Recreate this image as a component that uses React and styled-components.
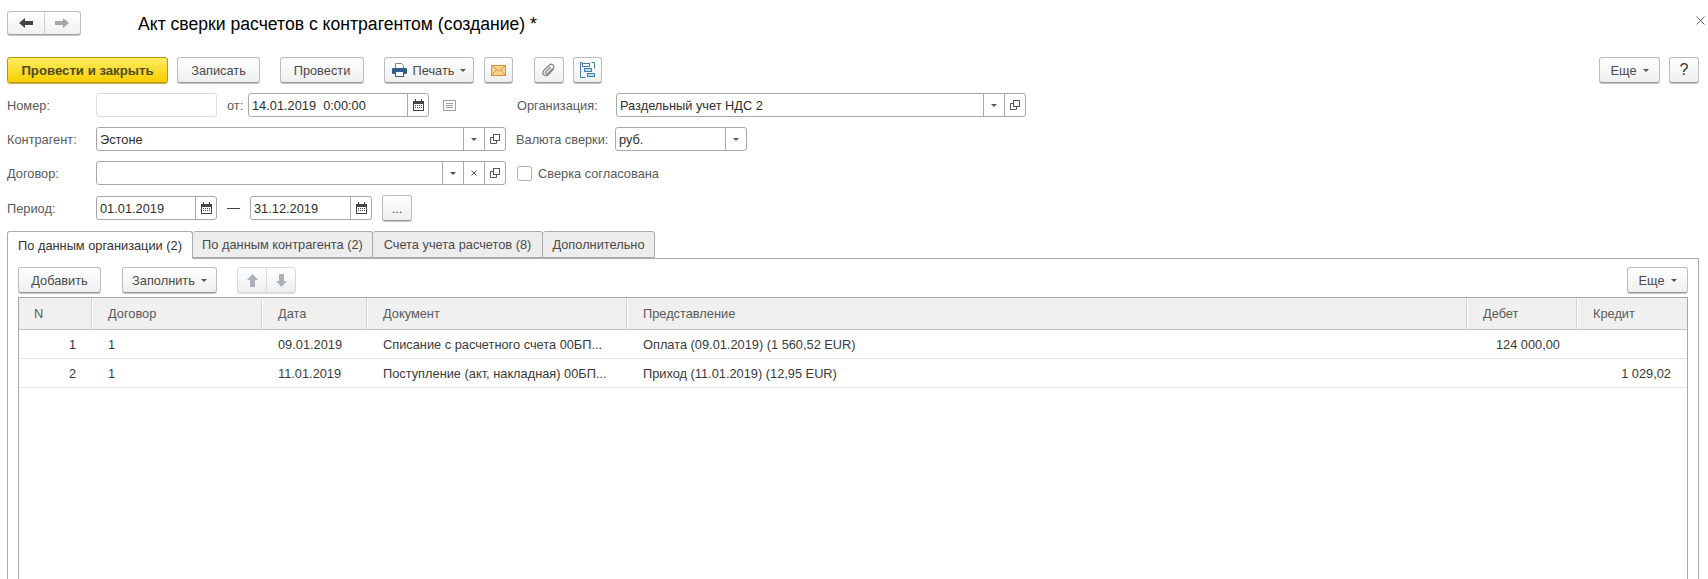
import React from "react";
import styled, { createGlobalStyle } from "styled-components";

const Global = createGlobalStyle`
  html, body { margin: 0; padding: 0; background: #fff; }
  body { font-family: "Liberation Sans", Arial, sans-serif; font-size: 12.8px; color: #4b4b4b; }
`;

const Page = styled.div`
  position: relative;
  width: 1708px;
  height: 579px;
  overflow: hidden;
  box-sizing: border-box;
  padding: 11px 9px 0 7px;
  display: flex;
  flex-direction: column;
`;
const Header = styled.div`
  display: flex;
  align-items: center;
  height: 24px;
  margin-bottom: 22px;
`;
const NavGroup = styled.div`
  display: flex;
  width: 74px;
  height: 24px;
  box-sizing: border-box;
  border: 1px solid #bdbdbd;
  border-bottom-color: #9d9d9d;
  border-radius: 3px;
  background: linear-gradient(#fff, #f1f1f1);
  box-shadow: 0 1px 0 #c8c8c8;
`;
const NavCell = styled.div`
  flex: 1;
  display: flex;
  align-items: center;
  justify-content: center;
  & + & { border-left: 1px solid #d0d0d0; }
`;
const Title = styled.h1`
  margin: 2px 0 0 57px;
  font-size: 17.6px;
  font-weight: 400;
  color: #000;
`;
const Close = styled.div`
  position: absolute;
  top: 16px;
  right: 3px;
  line-height: 0;
`;
const Toolbar = styled.div`
  display: flex;
  align-items: stretch;
  height: 26px;
  margin-bottom: 10px;
`;
const Button = styled.div`
  box-sizing: border-box;
  width: ${p => p.$w}px;
  margin-left: ${p => p.$ml || 0}px;
  display: flex;
  align-items: center;
  justify-content: center;
  gap: 6px;
  border: 1px solid #bcbcbc;
  border-bottom-color: #9a9a9a;
  border-radius: 3px;
  background: linear-gradient(#fff, #efefef);
  box-shadow: 0 1px 0 #c4c4c4;
  font-size: 12.8px;
  color: #4b4b4b;
  white-space: nowrap;
`;
const PrimaryButton = styled(Button)`
  border-color: #b5980f;
  background: linear-gradient(#fdec62, #f7cf00);
  box-shadow: 0 1px 0 #c9b24a;
  font-size: 13.2px;
  font-weight: 700;
  color: #4e4a22;
`;
const HelpButton = styled(Button)`
  font-size: 16px;
  color: #333;
`;
const EllipsisButton = styled(Button)`
  height: 26px;
`;
const Spacer = styled.div`
  flex: 1;
`;
const Caret = styled.span`
  width: 0;
  height: 0;
  border-left: 3px solid transparent;
  border-right: 3px solid transparent;
  border-top: 3px solid #555;
`;
const FormRow = styled.div`
  display: flex;
  align-items: center;
  height: 24px;
  margin-bottom: ${p => p.$mb ?? 10}px;
`;
const Label = styled.div`
  width: ${p => p.$w}px;
  margin-left: ${p => p.$ml || 0}px;
  flex: none;
  font-size: 12.8px;
  color: #5a5a5a;
  white-space: nowrap;
`;
const Field = styled.div`
  box-sizing: border-box;
  width: ${p => p.$w}px;
  height: ${p => p.$h || 24}px;
  flex: none;
  display: flex;
  align-items: stretch;
  border: 1px solid ${p => (p.$muted ? "#dcdcdc" : "#a8a8a8")};
  border-radius: 3px;
  background: #fff;
`;
const FieldValue = styled.div`
  flex: 1;
  min-width: 0;
  padding-left: 3px;
  display: flex;
  align-items: center;
  font-size: 12.8px;
  color: #2e2e2e;
  white-space: pre;
`;
const FieldBtn = styled.div`
  width: ${p => p.$w || 21}px;
  flex: none;
  box-sizing: border-box;
  display: flex;
  align-items: center;
  justify-content: center;
  border-left: 1px solid #a8a8a8;
`;
const Dash = styled.div`
  width: 13px;
  margin: 0 10px;
  height: 1px;
  background: #444;
`;
const Checkbox = styled.div`
  box-sizing: border-box;
  width: 15px;
  height: 15px;
  margin-left: 11px;
  margin-right: 6px;
  border: 1px solid #b0b0b0;
  border-radius: 3px;
  background: #fff;
`;
const NoteWrap = styled.div`
  width: 13px;
  margin-left: 14px;
  line-height: 0;
`;
const Tabs = styled.div`
  display: flex;
  height: 27px;
  position: relative;
  z-index: 1;
`;
const Tab = styled.div`
  box-sizing: border-box;
  width: ${p => p.$w}px;
  height: ${p => (p.$active ? 28 : 27)}px;
  display: flex;
  align-items: center;
  justify-content: center;
  border: 1px solid #ababab;
  border-left-width: ${p => (p.$first ? 1 : 0)}px;
  border-bottom-color: ${p => (p.$active ? "#fff" : "#ababab")};
  border-radius: 3px 3px 0 0;
  background: ${p => (p.$active ? "#fff" : "#ededed")};
  font-size: 12.8px;
  color: ${p => (p.$active ? "#333" : "#4b4b4b")};
  white-space: nowrap;
`;
const Panel = styled.div`
  flex: 1;
  margin: 0 0 -4px 0;
  padding: 8px 10px 0 10px;
  display: flex;
  flex-direction: column;
  border: 1px solid #ababab;
`;
const PanelBar = styled(Toolbar)`
  margin-bottom: 4px;
`;
const ArrowGroup = styled(Button)`
  gap: 0;
  border-color: #d8d8d8;
  box-shadow: 0 1px 0 #dddddd;
  align-items: stretch;
`;
const ArrowCell = styled(NavCell)`
  & + & { border-left-color: #dcdcdc; }
`;
const Table = styled.div`
  flex: 1;
  border: 1px solid #a8a8a8;
`;
const cols = "73px 170px 105px 260px 840px 110px 1fr";
const HeadRow = styled.div`
  display: grid;
  grid-template-columns: ${cols};
  height: 31px;
  background: #f0f0f0;
  border-bottom: 1px solid #c4c4c4;
`;
const HeadCell = styled.div`
  display: flex;
  align-items: center;
  padding-left: ${p => p.$pl ?? 15}px;
  border-left: ${p => (p.$first ? "none" : "1px solid #fff")};
  box-shadow: ${p => (p.$first ? "none" : "-1px 0 0 #d4d4d4")};
  font-size: 12.8px;
  color: #5a5a5a;
`;
const DataRow = styled.div`
  display: grid;
  grid-template-columns: ${cols};
  height: 28px;
  border-bottom: 1px solid #e4e4e4;
`;
const DataCell = styled.div`
  display: flex;
  align-items: center;
  justify-content: ${p => (p.$right ? "flex-end" : "flex-start")};
  padding-left: ${p => (p.$right ? 0 : 16)}px;
  padding-right: ${p => (p.$right ? p.$pr : 0)}px;
  font-size: 12.8px;
  color: #3a3a3a;
  white-space: nowrap;
`;

const ArrowLeft = ({ c }) => (
  <svg width="14" height="10" viewBox="0 0 14 10"><path d="M0 5 6 0v3h8v4H6v3z" fill={c} /></svg>
);
const ArrowRight = ({ c }) => (
  <svg width="14" height="10" viewBox="0 0 14 10"><path d="M14 5 8 0v3H0v4h8v3z" fill={c} /></svg>
);
const ArrowUp = () => (
  <svg width="11" height="13" viewBox="0 0 11 13"><path d="M5.5 0 11 6H8v7H3V6H0z" fill="#a9b2b8" /></svg>
);
const ArrowDown = () => (
  <svg width="11" height="13" viewBox="0 0 11 13"><path d="M5.5 13 11 7H8V0H3v7H0z" fill="#a9b2b8" /></svg>
);
const CloseIcon = () => (
  <svg width="9" height="9" viewBox="0 0 9 9"><path d="M.5.5l8 8M8.5.5l-8 8" stroke="#666" /></svg>
);
const PrintIcon = () => (
  <svg width="15" height="14" viewBox="0 0 15 14">
    <path d="M3.500.5h6l2 2v3h-8z" fill="#fff" stroke="#7a8794" />
    <rect x="0" y="5" width="15" height="6" rx="1" fill="#2f5f8a" />
    <rect x="3.500" y="8.500" width="8" height="5" fill="#fff" stroke="#2f5f8a" />
  </svg>
);
const MailIcon = () => (
  <svg width="15" height="11" viewBox="0 0 15 11">
    <rect x=".5" y=".5" width="14" height="10" fill="#f8d48e" stroke="#d9933a" />
    <path d="M.5.5 7.500 6l7-5.500M.5 10.500l5-6M14.500 10.500l-5-6" fill="none" stroke="#d9933a" />
  </svg>
);
const ClipIcon = () => (
  <svg width="14" height="14" viewBox="0 0 14 14">
    <path d="M12 5.500 6.500 11.500c-1.500 1.500-3.800 1.300-4.800.3s-1-3 .3-4.500L7.500 2c1-1 2.600-1 3.500-.1s.9 2.400 0 3.400L5.800 10.500c-.6.600-1.400.6-1.900.1s-.4-1.300.1-1.900L8.500 4" fill="none" stroke="#8a8a8a" strokeWidth="1.300" />
  </svg>
);
const StructIcon = () => (
  <svg width="15" height="16" viewBox="0 0 15 16">
    <rect x="2.500" y="1.500" width="7" height="3" fill="#fff" stroke="#3f7fa8" />
    <rect x="4.500" y="6.500" width="7" height="3" fill="#bcd8ea" stroke="#3f7fa8" />
    <rect x="7.500" y="11.500" width="7" height="3" fill="#bcd8ea" stroke="#3f7fa8" />
    <path d="M2.500.5H.5v15h5M11.500.5h3v6" fill="none" stroke="#3f7fa8" />
  </svg>
);
const CalendarIcon = () => (
  <svg width="11" height="12" viewBox="0 0 11 12">
    <path d="M0 2h11v10H0z" fill="#444" />
    <path d="M2 0h1v3H2zM8 0h1v3H8z" fill="#444" />
    <path d="M1 5h9v6H1z" fill="#fff" />
    <path d="M2 6h1v1H2zM4 6h1v1H4zM6 6h1v1H6zM8 6h1v1H8zM2 8h1v1H2zM4 8h1v1H4zM6 8h1v1H6zM8 8h1v1H8z" fill="#444" />
  </svg>
);
const NoteIcon = () => (
  <svg width="13" height="11" viewBox="0 0 13 11">
    <rect x=".5" y=".5" width="12" height="10" fill="none" stroke="#9aa3aa" />
    <path d="M3 3.500h7M3 5.500h7M3 7.500h7" stroke="#9aa3aa" />
  </svg>
);
const OpenIcon = () => (
  <svg width="10" height="10" viewBox="0 0 10 10">
    <rect x="3.500" y=".5" width="6" height="6" fill="none" stroke="#555" />
    <path d="M3.500 3.500H.5v6h6v-3" fill="none" stroke="#555" />
  </svg>
);
const ClearIcon = () => (
  <svg width="6" height="6" viewBox="0 0 6 6"><path d="M.5.5l5 5M5.500.5l-5 5" stroke="#555" /></svg>
);

const Row = ({ cells }) => (
  <DataRow>
    {cells.map((c, i) =>
      i === 0 ? <DataCell key={i} $right $pr={16}>{c}</DataCell>
      : i === 5 ? <DataCell key={i} $right $pr={17}>{c}</DataCell>
      : i === 6 ? <DataCell key={i} $right $pr={16}>{c}</DataCell>
      : <DataCell key={i}>{c}</DataCell>
    )}
  </DataRow>
);

export default function App() {
  return (
    <Page>
      <Global />
      <Close><CloseIcon /></Close>
      <Header>
        <NavGroup>
          <NavCell><ArrowLeft c="#444" /></NavCell>
          <NavCell><ArrowRight c="#a6a6a6" /></NavCell>
        </NavGroup>
        <Title>Акт сверки расчетов с контрагентом (создание) *</Title>
      </Header>

      <Toolbar>
        <PrimaryButton $w={161}>Провести и закрыть</PrimaryButton>
        <Button $w={83} $ml={9}>Записать</Button>
        <Button $w={84} $ml={20}>Провести</Button>
        <Button $w={90} $ml={20}><PrintIcon />Печать<Caret /></Button>
        <Button $w={29} $ml={10}><MailIcon /></Button>
        <Button $w={30} $ml={21}><ClipIcon /></Button>
        <Button $w={29} $ml={9}><StructIcon /></Button>
        <Spacer />
        <Button $w={61}>Еще<Caret /></Button>
        <HelpButton $w={30} $ml={9}>?</HelpButton>
      </Toolbar>

      <FormRow>
        <Label $w={89}>Номер:</Label>
        <Field $w={121} $muted />
        <Label $w={21} $ml={10}>от:</Label>
        <Field $w={181}>
          <FieldValue>14.01.2019  0:00:00</FieldValue>
          <FieldBtn><CalendarIcon /></FieldBtn>
        </Field>
        <NoteWrap><NoteIcon /></NoteWrap>
        <Label $w={99} $ml={61}>Организация:</Label>
        <Field $w={410}>
          <FieldValue>Раздельный учет НДС 2</FieldValue>
          <FieldBtn><Caret /></FieldBtn>
          <FieldBtn><OpenIcon /></FieldBtn>
        </Field>
      </FormRow>

      <FormRow>
        <Label $w={89}>Контрагент:</Label>
        <Field $w={410}>
          <FieldValue>Эстоне</FieldValue>
          <FieldBtn><Caret /></FieldBtn>
          <FieldBtn><OpenIcon /></FieldBtn>
        </Field>
        <Label $w={99} $ml={10}>Валюта сверки:</Label>
        <Field $w={132}>
          <FieldValue>руб.</FieldValue>
          <FieldBtn><Caret /></FieldBtn>
        </Field>
      </FormRow>

      <FormRow $mb={11}>
        <Label $w={89}>Договор:</Label>
        <Field $w={410}>
          <FieldValue />
          <FieldBtn><Caret /></FieldBtn>
          <FieldBtn><ClearIcon /></FieldBtn>
          <FieldBtn><OpenIcon /></FieldBtn>
        </Field>
        <Checkbox />
        <Label $w={120}>Сверка согласована</Label>
      </FormRow>

      <FormRow $mb={11}>
        <Label $w={89}>Период:</Label>
        <Field $w={121}>
          <FieldValue>01.01.2019</FieldValue>
          <FieldBtn><CalendarIcon /></FieldBtn>
        </Field>
        <Dash />
        <Field $w={122}>
          <FieldValue>31.12.2019</FieldValue>
          <FieldBtn><CalendarIcon /></FieldBtn>
        </Field>
        <EllipsisButton $w={30} $ml={10}>...</EllipsisButton>
      </FormRow>

      <Tabs>
        <Tab $w={186} $first $active>По данным организации (2)</Tab>
        <Tab $w={180}>По данным контрагента (2)</Tab>
        <Tab $w={170}>Счета учета расчетов (8)</Tab>
        <Tab $w={112}>Дополнительно</Tab>
      </Tabs>
      <Panel>
        <PanelBar>
          <Button $w={83}>Добавить</Button>
          <Button $w={95} $ml={21}>Заполнить<Caret /></Button>
          <ArrowGroup $w={59} $ml={20}>
            <ArrowCell><ArrowUp /></ArrowCell>
            <ArrowCell><ArrowDown /></ArrowCell>
          </ArrowGroup>
          <Spacer />
          <Button $w={61}>Еще<Caret /></Button>
        </PanelBar>
        <Table>
          <HeadRow>
            <HeadCell $first $pl={15}>N</HeadCell>
            <HeadCell>Договор</HeadCell>
            <HeadCell>Дата</HeadCell>
            <HeadCell>Документ</HeadCell>
            <HeadCell>Представление</HeadCell>
            <HeadCell>Дебет</HeadCell>
            <HeadCell>Кредит</HeadCell>
          </HeadRow>
          <Row cells={["1", "1", "09.01.2019", "Списание с расчетного счета 00БП...", "Оплата (09.01.2019) (1 560,52 EUR)", "124 000,00", ""]} />
          <Row cells={["2", "1", "11.01.2019", "Поступление (акт, накладная) 00БП...", "Приход (11.01.2019) (12,95 EUR)", "", "1 029,02"]} />
        </Table>
      </Panel>
    </Page>
  );
}
